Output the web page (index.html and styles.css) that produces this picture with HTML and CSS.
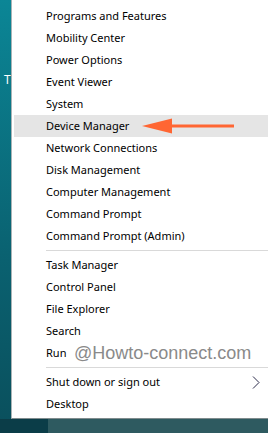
FILE: index.html
```html
<!DOCTYPE html>
<html lang="en">
<head>
  <meta charset="UTF-8" />
  <title>Quick Link Menu</title>
  <link rel="stylesheet" href="styles.css">
</head>
<body>

  <div class="desktop">
    <div class="desk-strip">
      <span class="desk-label">T</span>
    </div>

    <div class="menu">
      <div class="item">Programs and Features</div>
      <div class="item">Mobility Center</div>
      <div class="item">Power Options</div>
      <div class="item">Event Viewer</div>
      <div class="item">System</div>
      <div class="item active">
        Device Manager
        <svg class="pointer" width="96" height="18" viewBox="0 0 96 18">
          <polygon points="0,9 30,1.5 30,16.5" fill="#ff6633" />
          <rect x="28" y="7.5" width="64" height="3" fill="#ff6633" />
        </svg>
      </div>
      <div class="item">Network Connections</div>
      <div class="item">Disk Management</div>
      <div class="item">Computer Management</div>
      <div class="item">Command Prompt</div>
      <div class="item">Command Prompt (Admin)</div>
      <div class="sep"></div>
      <div class="item">Task Manager</div>
      <div class="item">Control Panel</div>
      <div class="item">File Explorer</div>
      <div class="item">Search</div>
      <div class="item">
        Run
        <span class="watermark">@Howto-connect.com</span>
      </div>
      <div class="sep"></div>
      <div class="item has-sub">
        Shut down or sign out
        <svg class="chevron" width="8" height="13" viewBox="0 0 8 13">
          <polyline points="1,0.5 7,6.5 1,12.5" fill="none" stroke="#2a2a4a" stroke-width="1" />
        </svg>
      </div>
      <div class="item">Desktop</div>
    </div>
  </div>

  <div class="taskbar">
    <div class="task-start"></div>
    <div class="task-rest"></div>
  </div>

</body>
</html>
```

FILE: styles.css
```css
* {
  box-sizing: border-box;
}

body {
  margin: 0;
  height: 433px;
  overflow: hidden;
  font-family: "Segoe UI", "Noto Sans", sans-serif;
  background: linear-gradient(#0b8696, #0a6170 60%, #0a4f5c);
  display: flex;
  flex-direction: column;
}

.desktop {
  display: flex;
  flex-direction: row;
}

.desk-strip {
  width: 11px;
  padding-top: 73px;
}

.desk-label {
  display: block;
  margin-left: 4px;
  color: #fff;
  font-size: 12px;
  line-height: 14px;
}

.menu {
  flex: 1;
  background-color: #fff;
  border-left: 1px solid #a9b3b5;
  border-bottom: 1px solid #7f8b8d;
  padding: 5px 0 3px 2px;
}

.item {
  position: relative;
  height: 22px;
  line-height: 22px;
  padding-left: 32px;
  font-size: 11px;
  color: #000;
  white-space: nowrap;
}

.item.active {
  background-color: #e5e5e5;
}

.pointer {
  position: absolute;
  left: 128px;
  top: 2px;
}

.watermark {
  position: absolute;
  left: 60px;
  top: 0;
  font-family: "Liberation Sans", Arial, sans-serif;
  font-size: 18px;
  color: #8a8a8a;
}

.chevron {
  position: absolute;
  right: 8px;
  top: 5px;
}

.sep {
  height: 7px;
  margin-left: 32px;
  display: flex;
  align-items: center;
}

.sep::after {
  content: "";
  flex: 1;
  height: 1px;
  background-color: #d9d9d9;
}

.taskbar {
  flex: 1;
  display: flex;
  flex-direction: row;
}

.task-start {
  width: 48px;
  background-color: #0b3d48;
}

.task-rest {
  flex: 1;
  background-color: #2e5a60;
}
```
